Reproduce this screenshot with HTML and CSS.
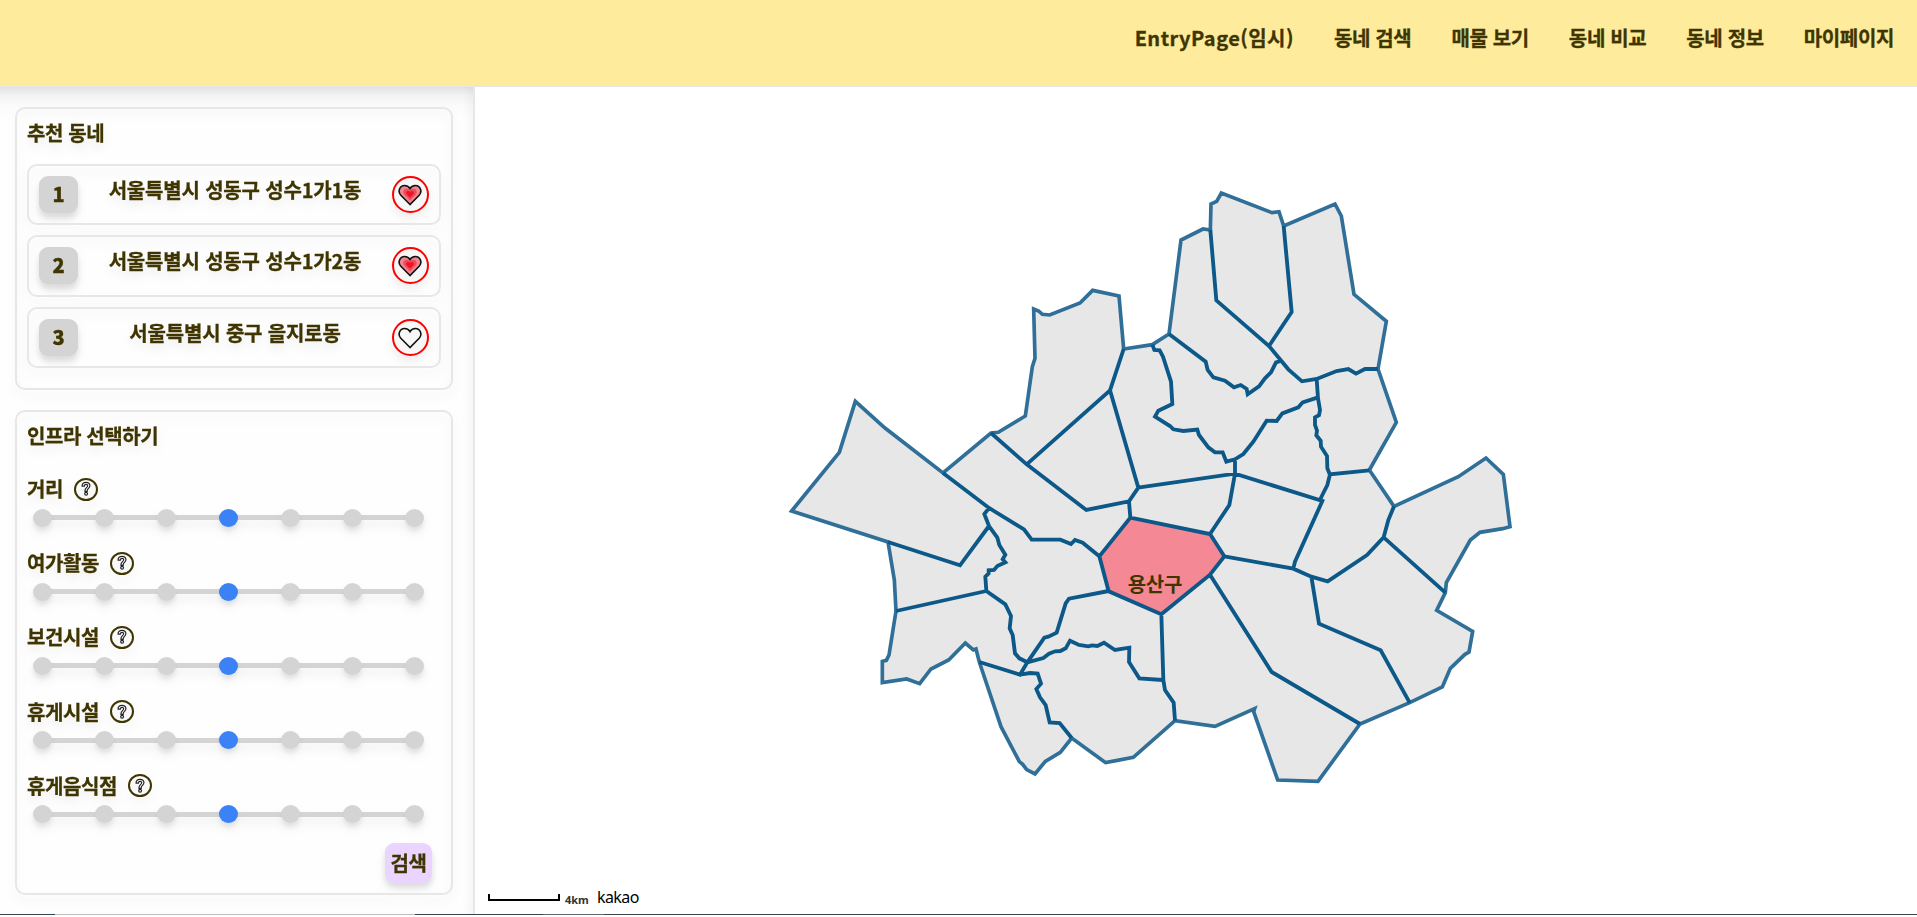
FILE: index.html
```html
<!DOCTYPE html>
<html lang="ko">
<head>
<meta charset="utf-8">
<title>동네 추천</title>
<link rel="stylesheet" href="styles.css">
</head>
<body>
<svg width="0" height="0" class="defs" aria-hidden="true">
  <symbol id="heart" viewBox="0 0 24 22"><path d="M12 20.5 2.6 11C-.4 7.6 1.5 1.5 6.6 1.5c2.6 0 4.400 1.200 5.400 3.200 1-2 2.800-3.200 5.400-3.200 5.100 0 7 6.100 4 9.500z"/></symbol>
  <symbol id="question" viewBox="0 0 12 18">
    <path d="M1.300 5.600C1 2.300 3.400 1 6 1c2.800 0 4.800 1.500 4.700 4.200-.1 2.800-3.200 3.300-3.300 5.800v.8H4.800v-1C4.800 7.600 8 7.400 8 5.200c0-1.100-.8-1.700-1.900-1.700S4.100 4.200 4 5.600z"/><circle cx="6.100" cy="14.800" r="1.700"/>
  </symbol>
</svg>
<header class="header">
  <nav class="nav">
    <a class="entry">EntryPage(임시)</a><a>동네 검색</a><a>매물 보기</a><a>동네 비교</a><a>동네 정보</a><a>마이페이지</a>
  </nav>
</header>
<div class="content">
  <aside class="sidebar">
    <section class="panel recommend">
      <h2>추천 동네</h2>
      <ul class="towns">
        <li><b class="rank">1</b><span>서울특별시 성동구 성수1가1동</span><i class="like on"><svg><use href="#heart"/><use class="mid" href="#heart"/><use class="core" href="#heart"/></svg></i></li>
        <li><b class="rank">2</b><span>서울특별시 성동구 성수1가2동</span><i class="like on"><svg><use href="#heart"/><use class="mid" href="#heart"/><use class="core" href="#heart"/></svg></i></li>
        <li><b class="rank">3</b><span>서울특별시 중구 을지로동</span><i class="like"><svg><use href="#heart"/></svg></i></li>
      </ul>
    </section>
    <section class="panel infra">
      <h2>인프라 선택하기</h2>
      <div class="field"><div class="label">거리<i class="help"><svg><use href="#question"/></svg></i></div><div class="slider"><i></i><i></i><i></i><i class="sel"></i><i></i><i></i><i></i></div></div>
      <div class="field"><div class="label">여가활동<i class="help"><svg><use href="#question"/></svg></i></div><div class="slider"><i></i><i></i><i></i><i class="sel"></i><i></i><i></i><i></i></div></div>
      <div class="field"><div class="label">보건시설<i class="help"><svg><use href="#question"/></svg></i></div><div class="slider"><i></i><i></i><i></i><i class="sel"></i><i></i><i></i><i></i></div></div>
      <div class="field"><div class="label">휴게시설<i class="help"><svg><use href="#question"/></svg></i></div><div class="slider"><i></i><i></i><i></i><i class="sel"></i><i></i><i></i><i></i></div></div>
      <div class="field"><div class="label">휴게음식점<i class="help"><svg><use href="#question"/></svg></i></div><div class="slider"><i></i><i></i><i></i><i class="sel"></i><i></i><i></i><i></i></div></div>
      <button class="search">검색</button>
    </section>
  </aside>
  <main class="map">
    <svg class="districts" viewBox="1425 261 4326 2481">
      <path class="city" d="M2375 1533 2518 1357 2566 1204 2655 1284 2829 1419 2973 1299 2995 1297 3076 1248 3097 1100 3105 1075 3101 927 3116 933 3127 943 3149 945 3240 909 3278 871 3357 888 3371 1047 3457 1034 3507 1002 3543 720 3609 687 3631 690 3633 612 3650 604 3664 579 3816 638 3837 635 3851 678 4005 612 4024 648 4062 883 4159 964 4134 1107 4189 1267 4108 1410 4182 1519 4375 1430 4458 1374 4510 1423 4530 1580 4508 1586 4440 1597 4411 1620 4339 1748 4336 1778 4310 1831 4418 1894 4407 1956 4395 1963 4351 2005 4327 2061 4229 2108 4080 2172 3954 2344 3833 2340 3761 2135 3764 2126 3645 2179 3525 2162 3400 2272 3317 2288 3215 2214 3181 2257 3136 2284 3105 2322 3080 2309 3068 2293 3058 2285 3003 2180 2938 1986 2928 1947 2920 1950 2896 1929 2846 1980 2793 2007 2759 2051 2720 2037 2647 2048 2647 1984 2659 1981 2667 1965 2688 1833 2683 1740 2664 1626Z"/>
      <path class="selected" d="M3391 1553 3630 1602 3673 1669 3630 1724 3484 1843 3326 1774 3298 1669Z"/>
      <path class="border" d="M3371 1047 3330 1171 3080 1393
        M2973 1299 3080 1393 3259 1530 3387 1504 3415 1463 3330 1171
        M3387 1504 3391 1553 3298 1669
        M2829 1419 2967 1524 3072 1588 3095 1619 3181 1619 3213 1632 3225 1620 3248 1628 3298 1669
        M2664 1626 2880 1696 2967 1578
        M2967 1524 2953 1542 2967 1578 2992 1613 2998 1635 3016 1664 3008 1678 3016 1687 2992 1698 2982 1710 2966 1711 2966 1720 2956 1730 2959 1773 3016 1813 3033 1848 3029 1885 3038 1905 3045 1960 3058 1975 3082 1987
        M2688 1833 2959 1773
        M2938 1986 3060 2024 3082 1987 3133 1913 3145 1910 3170 1898 3197 1810 3207 1796 3326 1773
        M3082 1987 3130 1974 3147 1961 3165 1954 3181 1953 3197 1945 3210 1922 3237 1935 3265 1939 3276 1936 3292 1938 3312 1928 3345 1950 3388 1943 3387 1986 3418 2035 3488 2040
        M3060 2024 3090 2019 3113 2021 3123 2051 3109 2067 3120 2092 3137 2115 3149 2167 3179 2169 3215 2214
        M3391 1553 3630 1602 3673 1669 3630 1724 3484 1843 3326 1774 3298 1669
        M3484 1843 3490 2040 3495 2070 3521 2108 3525 2162
        M3630 1724 3815 2016 4080 2172
        M3673 1669 3880 1706 3934 1730 3983 1744 4101 1665 4151 1612 4165 1560 4182 1519
        M4151 1612 4336 1778
        M3934 1730 3957 1871 4142 1951 4229 2108
        M3880 1706 3885 1685 3967 1503 3705 1421 3414 1463
        M3705 1378 3705 1421 3688 1515 3630 1602
        M3960 1500 3967 1485 3982 1455 3990 1423 4108 1411
        M3989 1422 3982 1405 3981 1368 3963 1340 3962 1322 3949 1306 3951 1292 3945 1275 3945 1252 3957 1246 3960 1230 3954 1195 3950 1137
        M4134 1107 4095 1107 4068 1121 4045 1107 4010 1113 3950 1137 3906 1144 3865 1108 3807 1038 3649 901 3631 690
        M3851 678 3875 936 3807 1038
        M3842 1083 3828 1087 3813 1117 3795 1135 3777 1159 3743 1183 3740 1167 3722 1155 3702 1162 3675 1142 3640 1132 3623 1110 3617 1085 3507 1002
        M3457 1034 3463 1050 3479 1051 3489 1070 3513 1145 3517 1212 3475 1232 3465 1250 3510 1278 3520 1288 3550 1293 3592 1289 3597 1305 3625 1342 3645 1357 3668 1357 3679 1385 3705 1378 3730 1362 3760 1325 3800 1262 3830 1263 3847 1240 3895 1222 3908 1207 3954 1192"/>
      <text class="name" x="3465" y="1776">용산구</text>
    </svg>
    <div class="legend"><i class="scale"></i><span class="km">4km</span><span class="brand">kakao</span></div>
  </main>
</div>
<footer class="edge"><i class="a"></i><i class="b"></i><i class="c"></i><i class="d"></i><i class="e"></i></footer>
</body>
</html>
```
FILE: styles.css
```css
* { box-sizing: border-box; }
body {
  margin: 0;
  width: 1917px;
  height: 917px;
  overflow: hidden;
  display: flex;
  flex-direction: column;
  background: #fff;
  color: #3f3500;
  font: 700 20px/30px "Noto Sans CJK KR", sans-serif;
  letter-spacing: -.18px;
  -webkit-text-stroke: .3px;
}
.defs { display: block; position: absolute; }
i { font-style: normal; }
.header {
  flex: none;
  height: 87px;
  background: #ffeb9c;
  border-bottom: 2px solid #e7e7e7;
}
.nav { display: flex; justify-content: flex-end; gap: 40px; padding: 23px 23px 0 0; letter-spacing: -.35px; }
.nav a { white-space: nowrap; }
.nav .entry { letter-spacing: .45px; }
.content { flex: none; height: 827px; display: flex; }
.sidebar {
  flex: none;
  width: 475px;
  padding: 20px 20px 0 15px;
  border-right: 2px solid #e7e7e7;
  display: flex;
  flex-direction: column;
  gap: 20px;
  background: linear-gradient(#0000001c, #0000000c 8px, #00000003 20px, #0000 32px), #fefefe;
  box-shadow: inset -8px 0 10px -4px #0000000a;
}
.panel {
  border: 2px solid #e7e7e7;
  border-radius: 10px;
  filter: drop-shadow(0 6px 5px #00000010);
}
.recommend { height: 283px; padding: 9px 10px 0; }
.infra { height: 485px; padding: 9px 10px 0; display: flex; flex-direction: column; }
h2 { margin: 0; font: inherit; letter-spacing: -.4px; }
.towns {
  list-style: none;
  margin: 16px 0 0;
  padding: 0;
  display: flex;
  flex-direction: column;
  gap: 10px;
}
.towns li {
  height: 61.3px;
  padding: 10px;
  border: 2px solid #e7e7e7;
  border-radius: 10px;
  display: flex;
  justify-content: space-between;
}
.towns span { line-height: 28px; }
.rank {
  width: 39px;
  height: 37px;
  border-radius: 9px;
  background: #d4d4d4;
  line-height: 36px;
  text-align: center;
  box-shadow: 0 5px 6px #00000018;
}
.like {
  width: 37px;
  height: 37px;
  border: 2px solid #f00;
  border-radius: 50%;
  background: #f7f7f7;
  display: flex;
  justify-content: center;
  padding-top: 6px;
}
.like svg { width: 24px; height: 22px; fill: #fff0; stroke: #111; stroke-width: 1.6; }
.like.on svg { fill: #f08490; }
.like .mid, .like .core { stroke: none; transform-origin: 12px 10px; }
.like .mid { fill: #ed4c5a; transform: scale(.62); }
.like .core { fill: #ee1427; transform: scale(.36); }
.field { flex: none; height: 74.2px; }
.infra h2 { margin-bottom: 23px; }
.label { height: 30px; display: flex; align-items: center; gap: 11px; letter-spacing: -.4px; }
.help {
  width: 24px;
  height: 23px;
  border: 2px solid #3f3500;
  border-radius: 50%;
  display: flex;
  align-items: center;
  justify-content: center;
}
.help svg { width: 10px; height: 16px; fill: #fff; stroke: #222; stroke-width: 1.4; }
.slider {
  width: 391px;
  height: 19px;
  margin: 4px 0 0 6px;
  display: flex;
  align-items: center;
  justify-content: space-between;
  background: linear-gradient(#d4d4d4, #d4d4d4) center / 372px 5px no-repeat;
}
.slider i { width: 19px; height: 18px; border-radius: 50%; background: #d4d4d4; box-shadow: 0 4px 5px #00000012; }
.slider .sel { background: #3b82f6; }
.search {
  flex: none;
  align-self: flex-end;
  width: 47px;
  height: 40px;
  margin: -2px 9px 0 0;
  padding: 0;
  border: 0;
  border-radius: 9px;
  background: #e9d5ff;
  color: inherit;
  font: inherit;
  letter-spacing: -.4px;
  box-shadow: 0 4px 6px #00000018;
}
.map { width: 1442px; height: 827px; display: grid; }
.districts, .legend { grid-area: 1 / 1; }
.districts { width: 1442px; height: 827px; display: block; }
.city { fill: #e7e7e7; stroke: #2f6f98; stroke-width: 11; }
.selected { fill: #f58895; }
.border { fill: none; stroke: #0c5888; stroke-width: 11.5; }
.name { font-size: 60px; letter-spacing: -.5px; text-anchor: middle; fill: #3f3500; -webkit-text-stroke: 1px #3f3500; }
.legend {
  align-self: end;
  display: flex;
  align-items: flex-end;
  padding: 0 0 13px 13px;
  color: #111;
  line-height: 1;
  letter-spacing: 0;
  -webkit-text-stroke: 0;
}
.scale { width: 72px; height: 7px; border: 2px solid #000; border-top: 0; }
.km { margin: 0 0 -4px 5px; width: 32px; font: 700 11px/11px "Noto Sans", sans-serif; color: #333; }
.brand { margin-bottom: -5px; font: 400 16px/17px "Noto Sans", sans-serif; letter-spacing: -.6px; color: #000; }
.edge { flex: none; height: 3px; display: flex; }
.edge i { height: 1px; background: #344653; }
.a { width: 55px; }
.edge .b { width: 360px; background: #bdbdbd; }
.c { width: 128px; }
.edge .d { width: 61px; background: #5d6b70; }
.e { flex: 1; }
```
